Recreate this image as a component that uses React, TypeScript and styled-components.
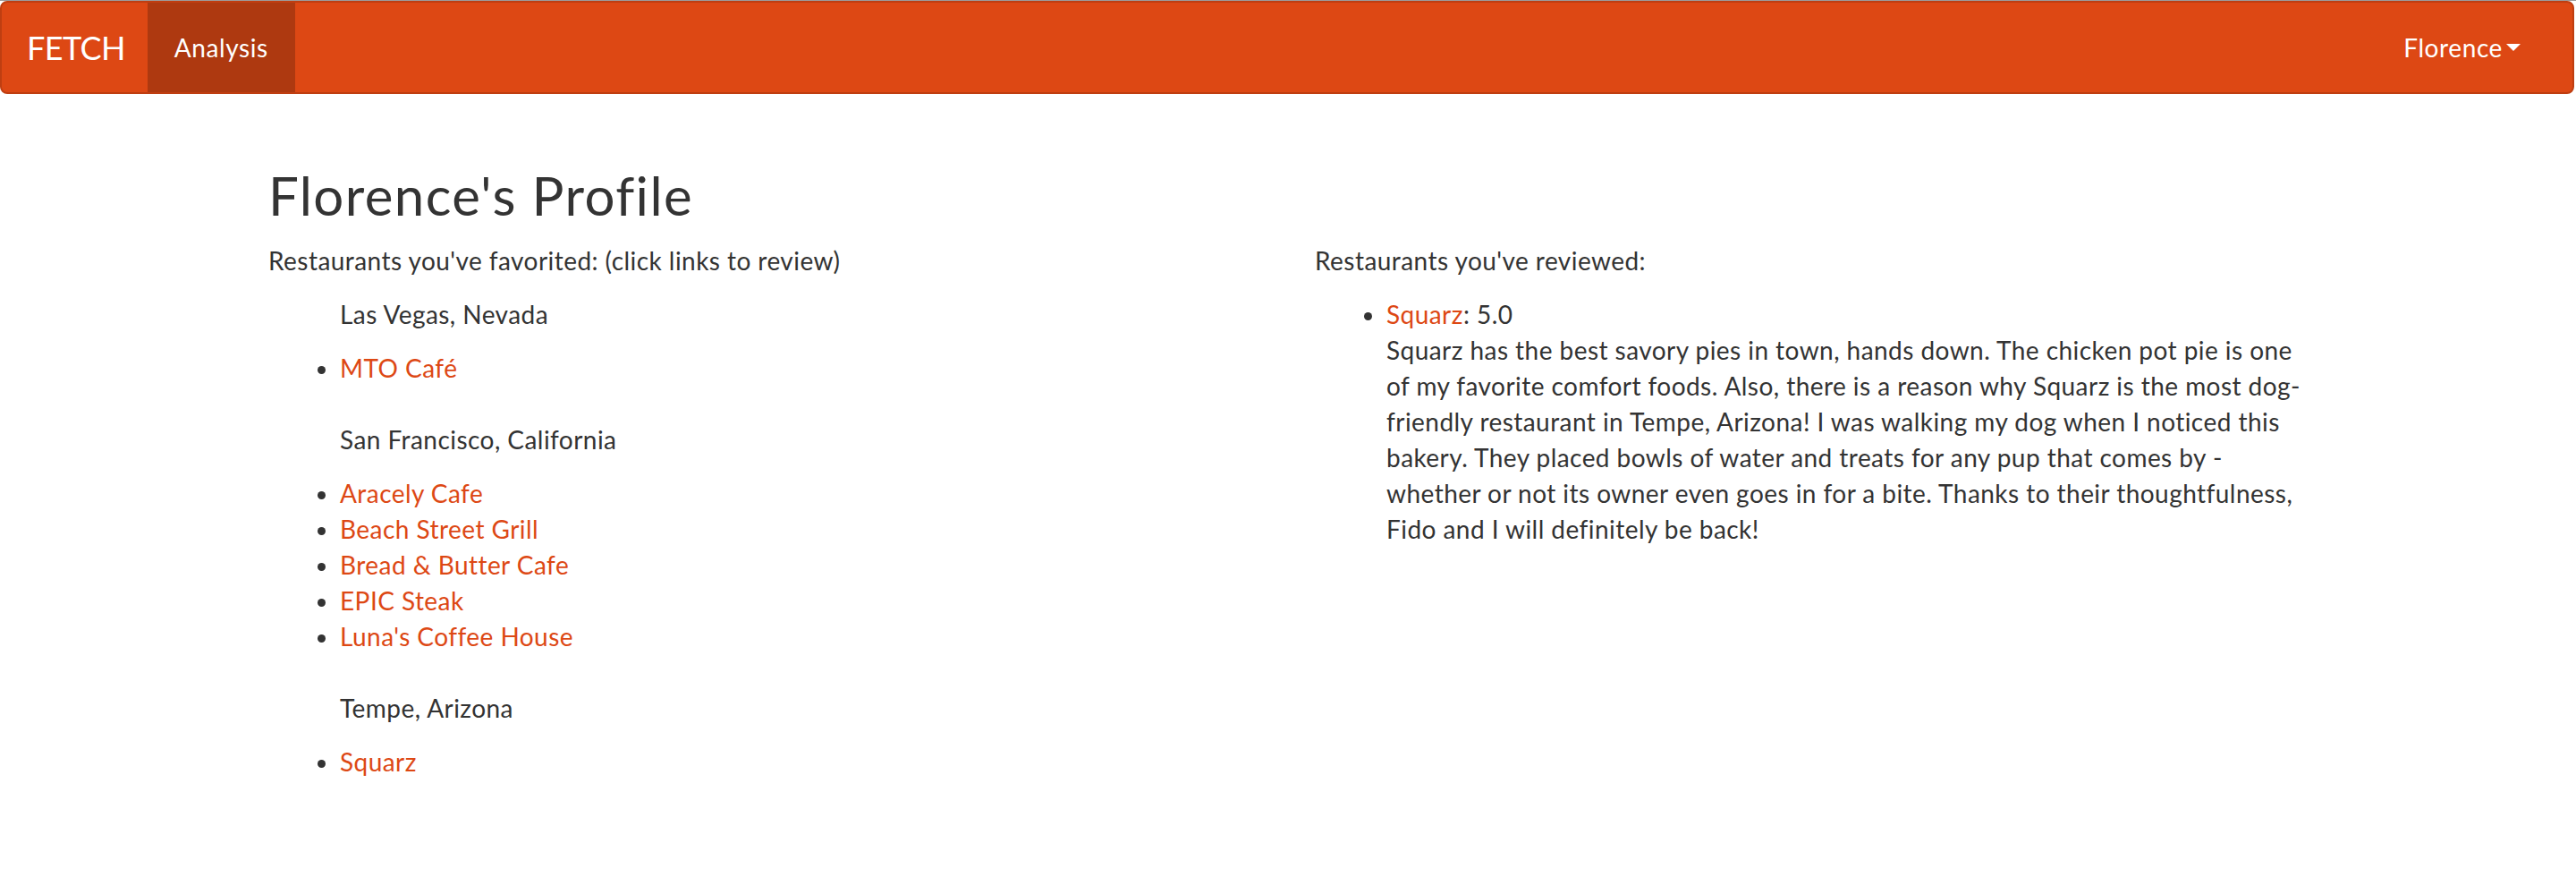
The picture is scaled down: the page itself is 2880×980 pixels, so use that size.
import styled, { createGlobalStyle } from 'styled-components'

interface CityGroup {
  city: string
  places: string[]
}

const favorites: CityGroup[] = [
  { city: 'Las Vegas, Nevada', places: ['MTO Café'] },
  {
    city: 'San Francisco, California',
    places: ['Aracely Cafe', 'Beach Street Grill', 'Bread & Butter Cafe', 'EPIC Steak', "Luna's Coffee House"],
  },
  { city: 'Tempe, Arizona', places: ['Squarz'] },
]

const review =
  'Squarz has the best savory pies in town, hands down. The chicken pot pie is one of my favorite comfort foods. Also, there is a reason why Squarz is the most dog-friendly restaurant in Tempe, Arizona! I was walking my dog when I noticed this bakery. They placed bowls of water and treats for any pup that comes by - whether or not its owner even goes in for a bite. Thanks to their thoughtfulness, Fido and I will definitely be back!'

const GlobalStyle = createGlobalStyle`
  html, body {
    margin: 0;
    background: #fff;
  }
  body {
    border-top: 1px solid #9c9c9c;
    font-family: Lato, "Open Sans", sans-serif;
    font-size: 28px;
    line-height: 40px;
    letter-spacing: 0.45px;
    color: #333;
  }
`

const Navbar = styled.nav`
  display: flex;
  align-items: stretch;
  min-height: 100px;
  margin: 0 2px 40px 0;
  padding-right: 28px;
  background: #dd4814;
  border: 2px solid #bf3e11;
  border-radius: 8px;
  overflow: hidden;
`

const Brand = styled.a`
  display: block;
  padding: 30px 25px 30px 28px;
  font-size: 36px;
  line-height: 40px;
  letter-spacing: -0.6px;
  color: #fff;
  text-decoration: none;
`

const NavItem = styled.a<{ $active?: boolean }>`
  display: flex;
  align-items: center;
  padding: 30px;
  font-size: 28px;
  line-height: 40px;
  letter-spacing: 0.6px;
  color: #fff;
  text-decoration: none;
  background: ${({ $active }) => ($active ? '#ae3910' : 'transparent')};
`

const Spacer = styled.div`
  flex: 1;
`

const Caret = styled.span`
  display: inline-block;
  width: 0;
  height: 0;
  margin-left: 4px;
  border-top: 8px solid #fff;
  border-left: 8px solid transparent;
  border-right: 8px solid transparent;
`

const Container = styled.main`
  width: 2340px;
  margin: 0 auto;
  padding: 0 30px;
  box-sizing: border-box;
`

const Title = styled.h2`
  margin: 80px 0 20px;
  font-size: 60px;
  line-height: 66px;
  font-weight: 400;
  letter-spacing: 1.4px;
  color: #333;
`

const Columns = styled.div`
  display: grid;
  grid-template-columns: 1fr 1fr;
  column-gap: 60px;
`

const Column = styled.section``

const Lead = styled.p`
  margin: 0 0 20px;
`

const City = styled.p`
  margin: 0 0 20px;
  padding-left: 80px;
`

const List = styled.ul<{ $gap: number }>`
  margin: 0 0 ${({ $gap }) => $gap}px;
  padding-left: 80px;
  list-style: disc;
`

const Link = styled.a`
  color: #dd4814;
  text-decoration: none;
`

const App = () => (
  <>
    <GlobalStyle />
    <Navbar>
      <Brand href="#">FETCH</Brand>
      <NavItem href="#" $active>
        Analysis
      </NavItem>
      <Spacer />
      <NavItem href="#">
        Florence
        <Caret />
      </NavItem>
    </Navbar>
    <Container>
      <Title>Florence's Profile</Title>
      <Columns>
        <Column>
          <Lead>Restaurants you've favorited: (click links to review)</Lead>
          {favorites.map((group) => (
            <div key={group.city}>
              <City>{group.city}</City>
              <List $gap={40}>
                {group.places.map((p) => (
                  <li key={p}>
                    <Link href="#">{p}</Link>
                  </li>
                ))}
              </List>
            </div>
          ))}
        </Column>
        <Column>
          <Lead>Restaurants you've reviewed:</Lead>
          <List $gap={20}>
            <li>
              <Link href="#">Squarz</Link>: 5.0
              <br />
              {review}
            </li>
          </List>
        </Column>
      </Columns>
    </Container>
  </>
)

export default App
